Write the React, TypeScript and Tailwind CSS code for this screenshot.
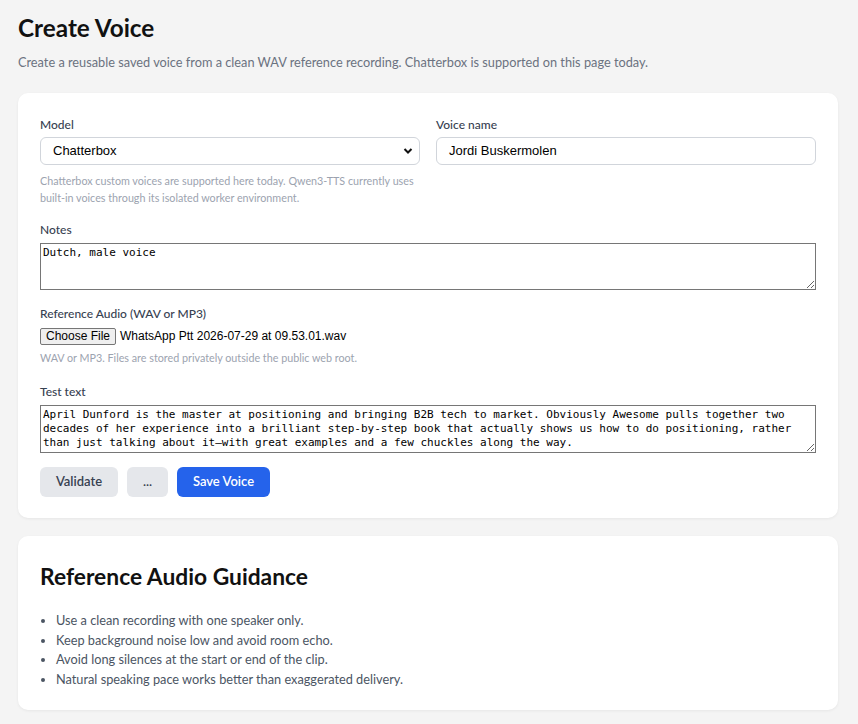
import React from "react";

const sans = "font-['Lato',_sans-serif]";

export default function App() {
  return (
    <div className={`min-h-screen bg-[#f4f4f4] pl-[18px] pr-[20px] pt-[12px] pb-[20px] ${sans} text-[#111827]`}>
      <h1 className="text-[24.3px] font-bold leading-[32px] text-[#111]">Create Voice</h1>
      <p className="mt-[8px] text-[12.75px] leading-[20px] text-[#6b7280]">
        Create a reusable saved voice from a clean WAV reference recording. Chatterbox is supported on this page today.
      </p>

      <div className="mt-[21px] rounded-[10px] bg-white px-[22px] pt-[23px] pb-[21px] shadow-[0_1px_3px_rgba(0,0,0,0.06)]">
        <div className="grid grid-cols-2 gap-x-[16px]">
          <div>
            <label className="block text-[12px] font-medium leading-[18px] text-[#374151]">Model</label>
            <div className="relative mt-[3px]">
              <div className="flex h-[28px] items-center rounded-[6px] border border-[#d1d5db] px-[12px] font-['Liberation_Sans',_Arial,_sans-serif] text-[13px] text-black">
                Chatterbox
              </div>
              <svg className="absolute right-[7px] top-[10px]" width="10" height="8" viewBox="0 0 10 8">
                <path d="M1.5 2 L5 5.5 L8.5 2" fill="none" stroke="#111" strokeWidth="2" />
              </svg>
            </div>
            <p className="mt-[7px] text-[10.75px] leading-[17px] text-[#9ca3af]">
              Chatterbox custom voices are supported here today. Qwen3-TTS currently uses built-in voices through its isolated worker environment.
            </p>
          </div>
          <div>
            <label className="block text-[12px] font-medium leading-[18px] text-[#374151]">Voice name</label>
            <div className="mt-[3px] flex h-[28px] items-center rounded-[6px] border border-[#d1d5db] px-[12px] font-['Liberation_Sans',_Arial,_sans-serif] text-[13px] text-black">
              Jordi Buskermolen
            </div>
          </div>
        </div>

        <label className="mt-[15px] block text-[12px] font-medium leading-[18px] text-[#374151]">Notes</label>
        <textarea
          readOnly
          defaultValue="Dutch, male voice"
          className="mt-[4px] block h-[47px] w-full resize-y border border-[#767676] px-[2px] py-[2px] font-['DejaVu_Sans_Mono',_monospace] text-[11px] leading-[14px] text-black outline-none"
        />

        <label className="mt-[15px] block text-[12px] font-medium leading-[18px] text-[#374151]">Reference Audio (WAV or MP3)</label>
        <div className="mt-[4px] flex items-center font-['Liberation_Sans',_Arial,_sans-serif] text-[12px] text-black">
          <span className="rounded-[2px] border border-[#767676] bg-[#efefef] px-[5px] leading-[15px]">Choose File</span>
          <span className="ml-[4px]">WhatsApp Ptt 2026-07-29 at 09.53.01.wav</span>
        </div>
        <p className="mt-[4px] text-[10.75px] leading-[17px] text-[#9ca3af]">
          WAV or MP3. Files are stored privately outside the public web root.
        </p>

        <label className="mt-[17px] block text-[12px] font-medium leading-[18px] text-[#374151]">Test text</label>
        <textarea
          readOnly
          defaultValue="April Dunford is the master at positioning and bringing B2B tech to market. Obviously Awesome pulls together two decades of her experience into a brilliant step-by-step book that actually shows us how to do positioning, rather than just talking about it—with great examples and a few chuckles along the way."
          className="mt-[4px] block h-[48px] w-full resize-y border border-[#767676] px-[2px] py-[2px] font-['DejaVu_Sans_Mono',_monospace] text-[11px] leading-[14px] text-black outline-none"
        />

        <div className="mt-[14px] flex gap-[9px]">
          <button className="h-[30px] w-[78px] rounded-[6px] bg-[#e5e7eb] text-[13px] font-semibold text-[#374151]">Validate</button>
          <button className="h-[30px] w-[41px] rounded-[6px] bg-[#e5e7eb] text-[13px] font-semibold text-[#374151]">...</button>
          <button className="h-[30px] w-[93px] rounded-[6px] bg-[#2563eb] text-[13px] font-semibold text-white">Save Voice</button>
        </div>
      </div>

      <div className="mt-[18px] rounded-[10px] bg-white px-[22px] pt-[26px] pb-[20px] shadow-[0_1px_3px_rgba(0,0,0,0.06)]">
        <h2 className="text-[22.8px] font-bold leading-[28px] text-[#111]">Reference Audio Guidance</h2>
        <ul className="mt-[21px] list-disc pl-[16px] text-[12.75px] leading-[19.7px] text-[#4b5563]">
          <li>Use a clean recording with one speaker only.</li>
          <li>Keep background noise low and avoid room echo.</li>
          <li>Avoid long silences at the start or end of the clip.</li>
          <li>Natural speaking pace works better than exaggerated delivery.</li>
        </ul>
      </div>
    </div>
  );
}
